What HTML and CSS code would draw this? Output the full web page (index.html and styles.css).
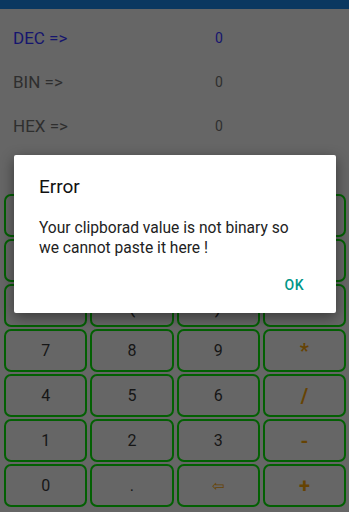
FILE: index.html
```html
<!DOCTYPE html>
<html>
<head>
<meta charset="utf-8">
<link rel="stylesheet" href="styles.css">
</head>
<body>
<div class="app">
  <div class="topbar"></div>
  <div class="rows">
    <div class="row active"><span class="label">DEC =&gt;</span><span class="value">0</span></div>
    <div class="row"><span class="label">BIN =&gt;</span><span class="value">0</span></div>
    <div class="row"><span class="label">HEX =&gt;</span><span class="value">0</span></div>
    <div class="row"></div>
  </div>
  <div class="keys">
    <div class="key"></div><div class="key"></div><div class="key"></div><div class="key op"></div>
    <div class="key"></div><div class="key"></div><div class="key"></div><div class="key op"></div>
    <div class="key low">C</div><div class="key low">(</div><div class="key low">)</div><div class="key op low">^</div>
    <div class="key">7</div><div class="key">8</div><div class="key">9</div><div class="key op big">*</div>
    <div class="key">4</div><div class="key">5</div><div class="key">6</div><div class="key op big">/</div>
    <div class="key">1</div><div class="key">2</div><div class="key">3</div><div class="key op big">-</div>
    <div class="key">0</div><div class="key">.</div><div class="key op small">&#8678;</div><div class="key op big">+</div>
  </div>
</div>
<div class="dialog">
  <div class="title">Error</div>
  <div class="message">Your clipborad value is not binary so we cannot paste it here !</div>
  <div class="actions"><span class="ok">OK</span></div>
</div>
</body>
</html>
```
FILE: styles.css
```css
html, body {
  margin: 0;
  padding: 0;
}
body {
  width: 349px;
  height: 512px;
  overflow: hidden;
  background: #666666;
  font-family: Roboto, "Noto Sans", sans-serif;
  position: relative;
}
.topbar {
  height: 9px;
  background: #0b3860;
}
.rows {
  padding: 7px 0 0 13px;
}
.row {
  height: 44px;
  display: grid;
  grid-template-columns: 202px auto;
  align-items: center;
  color: #2e2e2e;
}
.row .label {
  font-size: 17px;
}
.row .value {
  font-size: 14px;
}
.row.active {
  color: #15156e;
}
.keys {
  margin-top: 2px;
  padding: 0 3px 0 4px;
  display: grid;
  grid-template-columns: repeat(4, 1fr);
  grid-auto-rows: 43px;
  gap: 2px 3px;
}
.key {
  border: 2px solid #036003;
  border-radius: 7px;
  display: flex;
  align-items: center;
  justify-content: center;
  font-size: 16px;
  color: #161616;
}
.key.low {
  font-size: 20px;
}
.key.op {
  color: #664303;
}
.key.big {
  font-size: 20px;
  font-weight: bold;
}
.key.small {
  font-size: 15px;
}
.dialog {
  position: absolute;
  left: 14px;
  top: 155px;
  width: 322px;
  height: 158px;
  box-sizing: border-box;
  background: #ffffff;
  border-radius: 2px;
  box-shadow: 0 4px 14px rgba(0, 0, 0, 0.45);
  padding: 20px 30px 0 25px;
}
.title {
  font-size: 19px;
  line-height: 24px;
  color: #111111;
}
.message {
  margin-top: 20px;
  font-size: 15.6px;
  line-height: 19.5px;
  color: #222222;
}
.actions {
  display: flex;
  justify-content: flex-end;
  margin-top: 17px;
  padding-right: 2px;
}
.ok {
  font-size: 14px;
  font-weight: 500;
  line-height: 20px;
  color: #009688;
  letter-spacing: 0.5px;
}
```
